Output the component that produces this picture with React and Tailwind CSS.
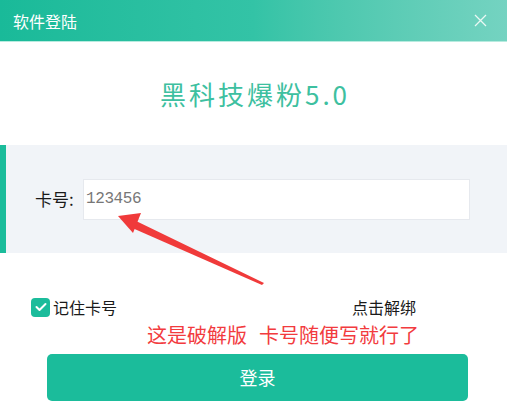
import React from "react";

const cjk = { fontFamily: '"Noto Sans CJK SC", "Noto Sans", sans-serif' };

const Arrow = () => (
  <svg
    className="absolute left-0 top-0 pointer-events-none"
    width="507"
    height="418"
    viewBox="0 0 507 418"
  >
    {/* tapered shaft */}
    <polygon points="262,285 264,283 134,220 130,227" fill="#f03a3a" />
    {/* head */}
    <polygon points="118,216 141,213 133,233" fill="#f03a3a" />
  </svg>
);

const App = () => {
  return (
    <div
      className="relative w-[507px] h-[418px] bg-white overflow-hidden"
      style={cjk}
    >
      {/* title bar */}
      <div className="h-[41px] flex items-center justify-between pl-[13px] pr-[20px] bg-gradient-to-r from-[#19ba99] via-[#33c3a6] to-[#74d3c1] text-white">
        <span className="text-[16px] leading-none">软件登陆</span>
        <svg width="13" height="13" viewBox="0 0 13 13">
          <path d="M1 1L12 12M12 1L1 12" stroke="#e9f8f4" strokeWidth="1.3" />
        </svg>
      </div>
      <div className="h-px bg-[#b7ebdf]" />

      {/* heading */}
      <div className="h-[103px] flex items-center justify-center">
        <h1 className="text-[26px] tracking-[3px] text-[#3dc0a0] font-normal pl-[3px]">
          黑科技爆粉5.0
        </h1>
      </div>

      {/* card number panel */}
      <div className="h-[108px] bg-[#f1f4f8] border-l-[6px] border-[#1bbc9b] flex items-center pl-[29px] pr-[37px]">
        <label className="w-[48px] text-[17px] text-[#1a1a1a]">卡号:</label>
        <div className="flex-1 h-[41px] bg-white border border-[#e6e9ee] flex items-center pl-[2px]">
          <span
            className="text-[16px] tracking-[-0.4px] text-[#777]"
            style={{ fontFamily: '"Liberation Mono", monospace' }}
          >
            123456
          </span>
        </div>
      </div>

      {/* remember row */}
      <div className="mt-[44px] flex items-center justify-between pl-[31px] pr-[91px] h-[20px]">
        <div className="flex items-center gap-[3px]">
          <span className="w-[19px] h-[19px] rounded-[4px] bg-[#1bbc9b] flex items-center justify-center">
            <svg width="12" height="10" viewBox="0 0 12 10">
              <path
                d="M1.5 5L4.5 8L10.5 2"
                fill="none"
                stroke="white"
                strokeWidth="2"
                strokeLinecap="round"
                strokeLinejoin="round"
              />
            </svg>
          </span>
          <span className="text-[16px] text-[#1a1a1a]">记住卡号</span>
        </div>
        <span className="text-[16px] text-[#1a1a1a]">点击解绑</span>
      </div>

      {/* note */}
      <div className="pl-[147px] mt-[3px] h-[29px] flex items-center gap-[12px] text-[20px] text-[#f23b3e]">
        <span>这是破解版</span>
        <span>卡号随便写就行了</span>
      </div>

      {/* login button */}
      <button className="ml-[47px] mt-[5px] w-[421px] h-[47px] rounded-[5px] bg-[#1bbc9b] text-white text-[18px]">
        登录
      </button>

      <Arrow />
    </div>
  );
};

export default App;
